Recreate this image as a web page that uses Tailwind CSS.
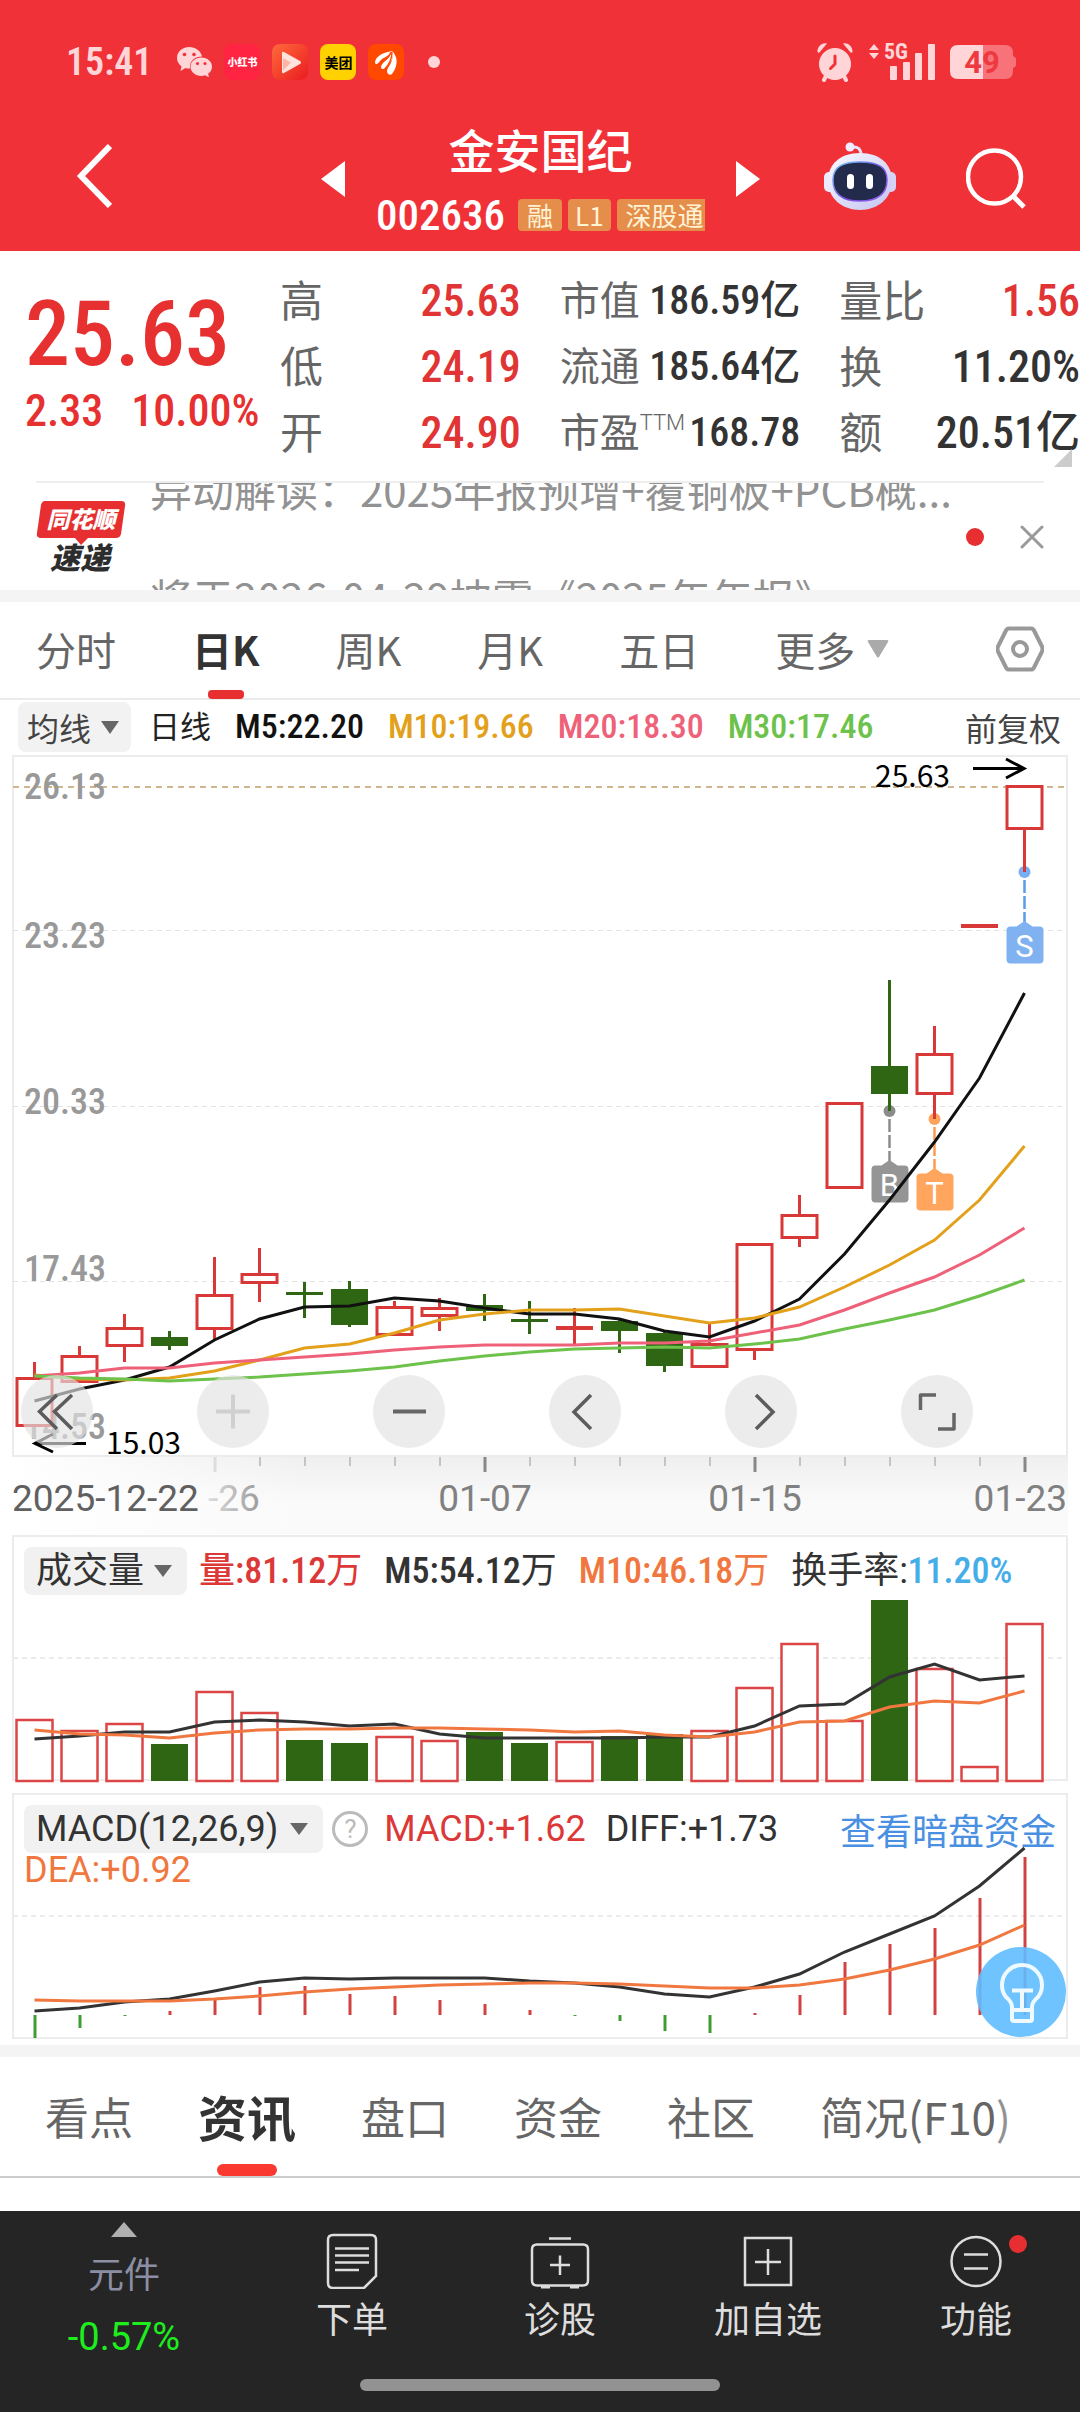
<!DOCTYPE html>
<html lang="zh-CN">
<head>
<meta charset="utf-8">
<meta name="viewport" content="width=device-width, initial-scale=1">
<title>金安国纪 002636</title>
<script src="https://cdn.jsdelivr.net/npm/@tailwindcss/browser@4"></script>
</head>
<body class="min-h-screen bg-white font-['Noto_Sans_CJK_SC',sans-serif] text-[#333333]">
<div class="flex min-h-screen flex-col">

<header class="bg-[#f13138] text-white">
  <!-- status bar -->
  <div class="flex h-[82px] items-center pt-[42px] pr-[64px] pl-[66px] text-[#ffd5d7]">
    <span class="font-['Roboto_Condensed',sans-serif] text-[38px] leading-10 font-semibold">15:41</span>
    <svg class="ml-[25px] h-[30px] w-9" viewBox="0 0 36 30" fill="#ffd5d7"><path d="M12 0C5 0 0 5 0 11c0 4 2 6 4.500 8.500L3.500 24l5-3c1.500.4 3 .6 4.500.5C12 14 18 9.500 25 9.500 24 4 18.500 0 12 0z"/><path d="M24.500 10.500c-6 0-11 4-11 9.200s5 9.200 11 9.200c1.300 0 2.500-.2 3.600-.6l3.900 2-.9-3.600c2.500-1.800 3.900-4.200 3.900-7 0-5.200-4.700-9.200-10.500-9.200z"/><g fill="#f13138"><circle cx="7.500" cy="7.500" r="1.800"/><circle cx="17" cy="7.500" r="1.800"/><circle cx="20.500" cy="16.500" r="1.600"/><circle cx="28" cy="16.500" r="1.600"/></g></svg>
    <span class="ml-[11px] h-9 w-9 rounded-lg bg-[#ff2442] text-center text-[10px] leading-9 font-black text-white">小红书</span>
    <svg class="ml-3 h-9 w-9" viewBox="0 0 36 36"><defs><linearGradient id="play" x1="0" y1="0" x2="1" y2="1"><stop offset="0" stop-color="#ff6a3c"/><stop offset="1" stop-color="#ea1c20"/></linearGradient></defs><rect width="36" height="36" rx="8" fill="url(#play)"/><path d="M10 9q0-2 2-1l16 9q2 1.500 0 3l-16 9q-2 1-2-1z" fill="#ffe3dd"/><path d="M11 14l8 4.500-8 8z" fill="#ffb5a6"/></svg>
    <span class="ml-3 h-9 w-9 rounded-lg bg-[#ffd100] text-center text-[14px] leading-9 font-bold text-black">美团</span>
    <svg class="ml-3 h-9 w-9" viewBox="0 0 36 36"><rect width="36" height="36" rx="8" fill="#ff4800"/><g fill="#fff"><path d="M7 19c0-5 5-10 17-12-3 6-9 6-12 10-2 3-4 4-5 2z"/><path d="M13 23c1-6 9-7 11-16 3 7-2 12-7 17-2 2-4 1-4-1z"/><path d="M19 27c0-4 8-9 5-20 8 8 4 18 0 23-2 2-5 0-5-3z"/></g><path d="M12 19Q20 15 23 8M17 25Q24 17 24 8" fill="none" stroke="#ff4800" stroke-width="1.300"/></svg>
    <span class="ml-6 h-3 w-3 rounded-full bg-[#ffd5d7]"></span>
    <svg class="ml-auto h-10 w-[38px]" viewBox="0 0 38 40" fill="#ffd5d7"><circle cx="19" cy="22" r="16"/><path d="M1.500 10C1 5 6 0 11 1.500L3 11zM36.500 10C37 5 32 0 27 1.500L35 11z"/><path d="M10 34l-2 4M28 34l2 4" stroke="#ffd5d7" stroke-width="4" stroke-linecap="round"/><path d="M19 14v8l-4.500 4.500" stroke="#f13138" stroke-width="3" fill="none" stroke-linecap="round"/></svg>
    <svg class="ml-[14px] h-10 w-[70px]" viewBox="0 0 70 40" fill="#ffd5d7"><path d="M1 8l5-6 5 6zM1 11h10l-5 6z"/><rect x="22" y="24" width="7" height="14" rx="1"/><rect x="35" y="20" width="7" height="18" rx="1"/><rect x="47" y="11" width="7" height="27" rx="1"/><rect x="60" y="2" width="7" height="36" rx="1"/><text x="16" y="17" font-family="Roboto Condensed" font-size="22" font-weight="700">5G</text></svg>
    <svg class="ml-3 h-[34px] w-[66px]" viewBox="0 0 66 34"><path d="M33 0h22q8 0 8 8v3q3 1 3 3v6q0 2-3 3v3q0 8-8 8h-22z" fill="#f77379"/><path d="M33 0H8Q0 0 0 8v18q0 8 8 8h25z" fill="#ffd5d7"/><text x="32" y="28" text-anchor="middle" font-family="Roboto" font-size="31" font-weight="700" fill="#ee3940">49</text></svg>
  </div>
  <!-- title bar -->
  <div class="flex items-start pr-[54px] pl-[76px]">
    <button aria-label="返回" class="mt-[62px]"><svg class="h-16 w-9" viewBox="0 0 36 64" fill="none" stroke="#fff" stroke-width="6"><path d="M34 2L5 32l29 30"/></svg></button>
    <div class="ml-[209px] flex items-start">
      <button aria-label="上一只" class="mt-[79px]"><svg class="h-9 w-6" viewBox="0 0 24 36" fill="#fff"><path d="M24 0v36L0 18z"/></svg></button>
      <div class="mx-[31px] flex w-[329px] flex-col pt-[38px] pb-5">
        <h1 class="text-center text-[46px] leading-[56px] font-medium">金安国纪</h1>
        <div class="mt-[23px] flex h-8 items-center gap-[6px] overflow-hidden">
          <span class="mr-[7px] font-['Roboto_Condensed',sans-serif] text-[43px] leading-8 font-medium">002636</span>
          <span class="shrink-0 rounded-[4px] bg-[#e58e4b] px-[9px] text-[26px] leading-8 text-[#fff3d6]">融</span>
          <span class="shrink-0 rounded-[4px] bg-[#e58e4b] px-[7px] text-[26px] leading-8 text-[#fff3d6]">L1</span>
          <span class="shrink-0 rounded-[4px] bg-[#e58e4b] px-[9px] text-[26px] leading-8 text-[#fff3d6]">深股通</span>
        </div>
      </div>
      <button aria-label="下一只" class="mt-[79px]"><svg class="h-9 w-6" viewBox="0 0 24 36" fill="#fff"><path d="M0 0v36l24-18z"/></svg></button>
    </div>
    <button aria-label="智能助手" class="mt-[60px] ml-auto"><svg class="h-[68px] w-[72px]" viewBox="0 0 72 68"><defs><linearGradient id="bot" x1="0" y1="0" x2="1" y2="1"><stop offset="0" stop-color="#fbfaff"/><stop offset="1" stop-color="#c4c3f2"/></linearGradient><linearGradient id="rim" x1="0" y1="0" x2="1" y2="1"><stop offset="0" stop-color="#6fc7f5"/><stop offset=".6" stop-color="#7a4be0"/><stop offset="1" stop-color="#9a6bf5"/></linearGradient></defs><rect x="0" y="30" width="12" height="20" rx="5" fill="#ecebfb"/><rect x="60" y="30" width="12" height="20" rx="5" fill="#d6d4f6"/><path d="M28 5q9-1 9 8" fill="none" stroke="#e6e4fb" stroke-width="3"/><circle cx="26" cy="5" r="4.500" fill="#efedff"/><path d="M36 11c20 0 32 11 32 28S54 68 36 68 4 56 4 39s12-28 32-28z" fill="url(#bot)"/><path d="M36 20c18 0 27 5 27 18 0 14-9 21-27 21S9 52 9 38c0-13 9-18 27-18z" fill="#232b4d" stroke="url(#rim)" stroke-width="1.500"/><rect x="23" y="32" width="7" height="15" rx="3.500" fill="#fff"/><rect x="42" y="32" width="7" height="15" rx="3.500" fill="#fff"/></svg></button>
    <button aria-label="搜索" class="mt-[65px] ml-[70px]"><svg class="h-[62px] w-[60px]" viewBox="0 0 60 62" fill="none" stroke="#fff" stroke-width="4.500"><circle cx="28.500" cy="30" r="26.500"/><path d="M47 49l11 11" stroke-width="5"/></svg></button>
  </div>
</header>

<!-- quote -->
<section class="relative flex pt-[17px] pb-[15px]">
  <div class="w-[280px] shrink-0 pt-[22px] pl-[25px] font-['Roboto_Condensed',sans-serif] font-medium text-[#e73030]">
    <div class="text-[90px] leading-[90px]">25.63</div>
    <div class="mt-[9px] flex gap-[28px] text-[44px] leading-[44px]"><span>2.33</span><span>10.00%</span></div>
  </div>
  <div class="grid flex-1 grid-cols-3 gap-[39px] leading-[66px] text-[#666666] [&_dt]:leading-[60px]">
    <dl class="text-[43px]">
      <div class="flex h-[66px] justify-between"><dt>高</dt><dd class="font-['Roboto_Condensed'] text-[44px] font-medium text-[#e13434]">25.63</dd></div>
      <div class="flex h-[66px] justify-between"><dt>低</dt><dd class="font-['Roboto_Condensed'] text-[44px] font-medium text-[#e13434]">24.19</dd></div>
      <div class="flex h-[66px] justify-between"><dt>开</dt><dd class="font-['Roboto_Condensed'] text-[44px] font-medium text-[#e13434]">24.90</dd></div>
    </dl>
    <dl class="text-[40px]">
      <div class="flex h-[66px] justify-between whitespace-nowrap"><dt>市值</dt><dd class="font-['Roboto_Condensed','Noto_Sans_CJK_SC'] font-medium text-[#333333]">186.59亿</dd></div>
      <div class="flex h-[66px] justify-between whitespace-nowrap"><dt>流通</dt><dd class="font-['Roboto_Condensed','Noto_Sans_CJK_SC'] font-medium text-[#333333]">185.64亿</dd></div>
      <div class="flex h-[66px] justify-between whitespace-nowrap"><dt class="flex">市盈<span class="font-[Roboto] text-[22px] leading-[46px] font-light">TTM</span></dt><dd class="font-['Roboto_Condensed'] font-medium text-[#333333]">168.78</dd></div>
    </dl>
    <dl class="text-[43px]">
      <div class="flex h-[66px] justify-between whitespace-nowrap"><dt>量比</dt><dd class="font-['Roboto_Condensed'] text-[44px] font-medium text-[#e13434]">1.56</dd></div>
      <div class="flex h-[66px] justify-between whitespace-nowrap"><dt>换</dt><dd class="font-['Roboto_Condensed'] text-[44px] font-medium text-[#333333]">11.20%</dd></div>
      <div class="flex h-[66px] justify-between whitespace-nowrap"><dt>额</dt><dd class="font-['Roboto_Condensed','Noto_Sans_CJK_SC'] text-[44px] font-medium text-[#333333]">20.51亿</dd></div>
    </dl>
  </div>
  <svg class="absolute right-2 bottom-[14px] h-[18px] w-[18px]" viewBox="0 0 18 18" fill="#cccccc"><path d="M18 0v18H0z"/></svg>
</section>

<!-- news ticker -->
<section class="mx-9 flex h-[109px] items-center overflow-hidden border-t-2 border-[#eeeeee]">
  <div class="w-[90px] shrink-0">
    <svg class="h-[76px] w-[90px]" viewBox="0 0 90 76"><path d="M9 2h76q5 0 4 5l-4 28q-1 4-5 4H52l-7 7-6-7H5q-5 0-4-5L5 6q1-4 4-4z" fill="#e72f31"/><g font-family="Noto Sans CJK SC" font-weight="900" font-style="italic" text-anchor="middle"><text x="45" y="29" font-size="23" fill="#fff">同花顺</text><text x="44" y="70" font-size="30" fill="#2d2d2d">速递</text></g></svg>
  </div>
  <div class="ml-[24px] h-[107px] flex-1 self-start overflow-hidden">
    <ul class="-mt-[21px] flex flex-col gap-[54px] text-[42px] leading-[54px] whitespace-nowrap text-[#929292]">
      <li><a href="#news1">异动解读：2025年报预增+覆铜板+PCB概...</a></li>
      <li><a href="#news2">将于2026-04-29披露《2025年年报》</a></li>
    </ul>
  </div>
  <span class="h-[18px] w-[18px] shrink-0 rounded-full bg-[#e72f31]"></span>
  <button aria-label="关闭" class="ml-9 shrink-0"><svg class="h-6 w-6" viewBox="0 0 24 24" stroke="#999" stroke-width="3" stroke-linecap="round"><path d="M2 2l20 20M22 2L2 22"/></svg></button>
</section>
<div class="h-3 bg-[#f4f4f4]"></div>

<!-- period tabs -->
<nav class="flex h-[98px] items-center gap-[76px] border-b-2 border-[#ebebeb] pr-9 pb-[2px] pl-9 text-[40px] leading-[60px] whitespace-nowrap text-[#666666]">
  <a href="#t">分时</a>
  <a href="#d" class="relative font-bold text-[#333333]">日K<span class="absolute -bottom-[20px] left-1/2 h-[9px] w-9 -translate-x-1/2 rounded-[4px] bg-[#e72f31]"></span></a>
  <a href="#w">周K</a>
  <a href="#m">月K</a>
  <a href="#5">五日</a>
  <button class="flex items-center gap-3">更多<svg class="h-[18px] w-[22px]" viewBox="0 0 22 18" fill="#aaaaaa"><path d="M2 0h18q2 0 1 2l-9 15q-1 1-2 0L1 2Q0 0 2 0z"/></svg></button>
  <button aria-label="设置" class="ml-auto"><svg class="h-[46px] w-12" viewBox="0 0 48 46" fill="none" stroke="#999" stroke-width="4" stroke-linejoin="round"><path d="M13 2.500h22q2 0 3 2l8 16q1 2.500 0 5l-8 16q-1 2-3 2H13q-2 0-3-2L2 25.500q-1-2.500 0-5l8-16q1-2 3-2z"/><circle cx="24" cy="23" r="7"/></svg></button>
</nav>

<!-- moving average legend -->
<div class="flex h-[54px] items-center pr-[19px] pl-[18px] text-[32px] leading-[50px] whitespace-nowrap">
  <button class="flex items-center gap-[10px] rounded-lg bg-[#f2f2f2] pr-3 pl-[9px] text-[#444444]">均线<svg class="h-[13px] w-[18px]" viewBox="0 0 18 13" fill="#666"><path d="M0 0h18L9 13z"/></svg></button>
  <div class="ml-[18px] flex items-baseline gap-[24px] font-['Roboto_Condensed','Noto_Sans_CJK_SC'] text-[34px] font-medium">
    <span class="text-[31px] font-normal text-[#222222]">日线</span>
    <span class="text-[#111111]">M5:22.20</span>
    <span class="text-[#e3a01b]">M10:19.66</span>
    <span class="text-[#ee6178]">M20:18.30</span>
    <span class="text-[#6cc24a]">M30:17.46</span>
  </div>
  <button class="ml-auto text-[#444444]">前复权</button>
</div>

<!-- candlestick chart -->
<section class="grid">
  <svg id="kline" class="col-start-1 row-start-1 block w-full" viewBox="0 754 1080 780">
    <defs>
      <linearGradient id="axisDown" x1="0" y1="0" x2="0" y2="1"><stop offset="0" stop-color="#efefef"/><stop offset=".6" stop-color="#fafafa"/><stop offset="1" stop-color="#fafafa"/></linearGradient>
      <linearGradient id="axisLeft" x1="0" y1="0" x2="1" y2="0"><stop offset="0" stop-color="#fff"/><stop offset="1" stop-color="#fff" stop-opacity="0"/></linearGradient>
      <linearGradient id="fade" gradientUnits="userSpaceOnUse" x1="205" y1="0" x2="262" y2="0"><stop offset="0" stop-color="#e0e0e0"/><stop offset="1" stop-color="#999"/></linearGradient>
    </defs>
    <rect x="12" y="1456" width="1056" height="78" fill="url(#axisDown)"/>
    <rect x="12" y="1456" width="300" height="78" fill="url(#axisLeft)"/>
    <rect x="13" y="756" width="1054" height="700" fill="#fff" stroke="#ececec" stroke-width="2"/>
    <g stroke="#e2e2e2" stroke-width="1" stroke-dasharray="5 4"><path d="M13 930.500H1066M13 1106.500H1066M13 1281.500H1066"/><path d="M13 787H1066" stroke="#c2a06a" stroke-width="1.500" stroke-dasharray="6 5"/></g>
    <g font-family="Roboto Condensed" font-size="36" font-weight="500" fill="#999"><text x="24" y="799">26.13</text><text x="24" y="948">23.23</text><text x="24" y="1114">20.33</text><text x="24" y="1281">17.43</text><text x="24" y="1439">14.53</text></g>
    <g id="candles"></g>
    <g font-family="Roboto" font-size="31" fill="#fff" text-anchor="middle">
      <g stroke-width="2.500" stroke-dasharray="13 3"><path d="M889.500 1119V1161" stroke="#8c8c8c"/><path d="M934.500 1127V1169" stroke="#ff9a4d"/><path d="M1024.500 880V922" stroke="#5b9bea"/></g>
      <circle cx="889.500" cy="1111" r="6" fill="#8c8c8c"/><path d="M889.500 1160l8 5.500h7q4 0 4 4v29q0 4-4 4h-29q-4 0-4-4v-29q0-4 4-4h6z" fill="#959595"/><text x="889.500" y="1196">B</text>
      <circle cx="934.500" cy="1119" r="6" fill="#ffa25c"/><path d="M934.500 1168l8 5.500h7q4 0 4 4v29q0 4-4 4h-29q-4 0-4-4v-29q0-4 4-4h6z" fill="#ffa55e"/><text x="934.500" y="1204">T</text>
      <circle cx="1024.500" cy="872" r="6" fill="#78aef2"/><path d="M1024.500 921l8 5.500h7q4 0 4 4v29q0 4-4 4h-29q-4 0-4-4v-29q0-4 4-4h6z" fill="#80b2f2"/><text x="1024.500" y="957">S</text>
      <path d="M889.500 1097V1111" stroke="#2f6614" stroke-width="3"/><path d="M934.500 1097V1119M1024.500 832V872" stroke="#d93838" stroke-width="3"/>
    </g>
    <g id="averages"></g>
    <g stroke="#000" stroke-width="3" fill="none"><path d="M973 768.500H1024M1006 759l18 9.500-18 9.500"/><path d="M86 1443.500H36M53 1434l-18 9.500 18 8.500"/></g>
    <g font-family="Noto Sans CJK SC" font-size="30" fill="#000"><text x="875" y="787">25.63</text><text x="106" y="1454">15.03</text></g>
    <g id="ticks"></g>
    <g font-family="Roboto" font-size="37" fill="#808080"><text x="12" y="1511" fill="#606060">2025-12-22</text><text x="208" y="1511" fill="url(#fade)">-26</text><text x="485" y="1511" text-anchor="middle">01-07</text><text x="755" y="1511" text-anchor="middle">01-15</text><text x="1067" y="1511" text-anchor="end">01-23</text></g>
  </svg>
  <div class="col-start-1 row-start-1 mb-[86px] flex items-end justify-between self-end pr-[107px] pl-[21px]">
    <button aria-label="最早" class="h-[73px] w-[72px] rounded-full bg-[#e2e2e2]/66"><svg class="h-full w-full" viewBox="0 0 72 73" fill="none" stroke="#5c5c5c" stroke-width="3.500"><path d="M36 20L18.500 36.500 36 54M51 20L33.500 36.500 51 54"/></svg></button>
    <button aria-label="放大" class="h-[73px] w-[72px] rounded-full bg-[#e2e2e2]/66"><svg class="h-full w-full" viewBox="0 0 72 73" stroke="#d0d0d0" stroke-width="4"><path d="M19 36.500H53M36 19.500V53.500"/></svg></button>
    <button aria-label="缩小" class="h-[73px] w-[72px] rounded-full bg-[#e2e2e2]/66"><svg class="h-full w-full" viewBox="0 0 72 73" stroke="#666" stroke-width="4"><path d="M20 36.500H53"/></svg></button>
    <button aria-label="左移" class="h-[73px] w-[72px] rounded-full bg-[#e2e2e2]/66"><svg class="h-full w-full" viewBox="0 0 72 73" fill="none" stroke="#5c5c5c" stroke-width="3.500"><path d="M42 20L25 37l17 17"/></svg></button>
    <button aria-label="右移" class="h-[73px] w-[72px] rounded-full bg-[#e2e2e2]/66"><svg class="h-full w-full" viewBox="0 0 72 73" fill="none" stroke="#5c5c5c" stroke-width="3.500"><path d="M31 20l17 17-17 17"/></svg></button>
    <button aria-label="全屏" class="h-[73px] w-[72px] rounded-full bg-[#e2e2e2]/66"><svg class="h-full w-full" viewBox="0 0 72 73" fill="none" stroke="#666" stroke-width="3.500" stroke-linejoin="round"><path d="M35 20H19.500V35M53 38V54H37"/></svg></button>
  </div>
</section>

<!-- volume -->
<section class="grid">
  <svg id="volume" class="col-start-1 row-start-1 block w-full" viewBox="0 1534 1080 253">
    <rect x="13" y="1536" width="1054" height="244" fill="#fff" stroke="#ececec" stroke-width="2"/>
    <path d="M13 1658H1066" stroke="#ebebeb" stroke-width="2" stroke-dasharray="5 4"/>
  </svg>
  <div class="col-start-1 row-start-1 mt-[13px] flex h-12 items-center self-start pl-6 font-['Roboto_Condensed','Noto_Sans_CJK_SC'] text-[36px] leading-[50px] font-medium whitespace-nowrap">
    <button class="flex h-12 items-center gap-[10px] rounded-lg bg-[#f1f1f1] pr-[15px] pl-3 font-normal">成交量<svg class="h-3 w-[18px]" viewBox="0 0 18 12" fill="#666"><path d="M0 0h18L9 12z"/></svg></button>
    <span class="ml-3 text-[#dc3838]">量:81.12<span class="font-normal">万</span></span>
    <span class="ml-[22px]">M5:54.12<span class="font-normal">万</span></span>
    <span class="ml-[22px] text-[#f07840]">M10:46.18<span class="font-normal">万</span></span>
    <span class="ml-[22px]"><span class="font-normal">换手率:</span><span class="text-[#45aee8]">11.20%</span></span>
  </div>
</section>

<!-- MACD -->
<section class="relative grid">
  <svg id="macd" class="col-start-1 row-start-1 block w-full" viewBox="0 1787 1080 258">
    <rect x="13" y="1794" width="1054" height="244" fill="#fff" stroke="#ececec" stroke-width="2"/>
    <path d="M13 1916H1066" stroke="#ebebeb" stroke-width="2" stroke-dasharray="5 4"/>
  </svg>
  <div class="col-start-1 row-start-1 mt-[18px] self-start pr-[24px] pl-6 font-[Roboto] text-[36px] whitespace-nowrap">
    <div class="flex h-12 items-center leading-[50px]">
      <button class="flex h-12 items-center gap-3 rounded-lg bg-[#f1f1f1] pr-[15px] pl-3">MACD(12,26,9)<svg class="h-3 w-[18px]" viewBox="0 0 18 12" fill="#666"><path d="M0 0h18L9 12z"/></svg></button>
      <button aria-label="说明" class="ml-[9px] h-9 w-9 rounded-full border-[3px] border-[#bbbbbb] text-[26px] leading-[30px] text-[#bbbbbb]">?</button>
      <span class="ml-[16px] text-[#dc3838]">MACD:+1.62</span>
      <span class="ml-5">DIFF:+1.73</span>
      <a href="#fund" class="ml-auto font-['Noto_Sans_CJK_SC'] leading-[46px] text-[#4a90e2]">查看暗盘资金</a>
    </div>
    <div class="leading-[34px] text-[#f07840]">DEA:+0.92</div>
  </div>
  <button aria-label="提示" class="absolute right-[14px] bottom-2 h-[90px] w-[90px] rounded-full bg-[#5fbcff]/90"><svg class="h-full w-full" viewBox="0 0 90 90" fill="none" stroke="#eefaff" stroke-width="4" stroke-linejoin="round"><path d="M36 72V60q0-5-6-10-4-5-4-12a20 20 0 0 1 40 0q0 7-4 12-6 5-6 10v12q0 2-2 2H38q-2 0-2-2zM36 63H56M36 43.500H57M46 44V63"/></svg></button>
</section>
<div class="h-3 bg-[#f4f4f4]"></div>

<!-- content tabs -->
<nav class="flex h-[121px] items-center gap-[65px] border-b-2 border-[#cccccc] pb-[2px] pl-[45px] text-[44px] leading-[72px] whitespace-nowrap text-[#666666]">
  <a href="#view">看点</a>
  <a href="#info" class="relative text-[49px] font-bold text-[#333333]">资讯<span class="absolute -bottom-[24px] left-1/2 h-3 w-[60px] -translate-x-1/2 rounded-full bg-[#fa3a31]"></span></a>
  <a href="#book">盘口</a>
  <a href="#money">资金</a>
  <a href="#club">社区</a>
  <a href="#f10">简况(F10<span class="text-[#929292]">)</span></a>
</nav>
<div class="min-h-[33px] flex-1"></div>

<!-- bottom bar -->
<footer class="bg-[#252525] text-[36px] text-[#dddddd]">
  <div class="grid h-[168px] grid-cols-[248fr_208fr_208fr_208fr_208fr]">
    <button class="flex flex-col items-center pt-[11px] text-[#8c8fa3]">
      <svg class="h-[15px] w-[26px]" viewBox="0 0 26 15" fill="#b0b0b0"><path d="M13 0l13 15H0z"/></svg>
      <span class="mt-[11px] leading-[48px]">元件</span>
      <span class="mt-[17px] font-[Roboto] text-[38px] leading-[48px] text-[#1eee1e]">-0.57%</span>
    </button>
    <button class="flex flex-col items-center pt-[22px]">
      <svg class="h-14 w-[52px]" viewBox="0 0 52 56" fill="none" stroke="#ddd" stroke-width="2.500"><path d="M7 2h38q5 0 5 5v36L38 55H7q-5 0-5-5V7q0-5 5-5zM9 15.500H43M9 22.500H43M9 29.500H43M9 37H33"/></svg>
      <span class="mt-1 leading-[48px]">下单</span>
    </button>
    <button class="flex flex-col items-center pt-[22px]">
      <svg class="h-14 w-[60px]" viewBox="0 0 60 56" fill="none" stroke="#ddd" stroke-width="2.500"><path d="M19 5.500H41M7 11.500H53q5 0 5 5v31q0 5-5 5H7q-5 0-5-5v-31q0-5 5-5zM30 22.500V42M20 32H40"/><path d="M11 54H20M40 54H49" stroke-width="3"/></svg>
      <span class="mt-1 leading-[48px]">诊股</span>
    </button>
    <button class="flex flex-col items-center pt-[22px]">
      <svg class="h-14 w-[52px]" viewBox="0 0 52 56" fill="none" stroke="#ddd" stroke-width="2.500"><path d="M3 5H49V52H3zM26 16V42M13 29H39"/></svg>
      <span class="mt-1 leading-[48px]">加自选</span>
    </button>
    <button class="relative flex flex-col items-center pt-[22px]">
      <svg class="h-14 w-[54px]" viewBox="0 0 54 56" fill="none" stroke="#ddd" stroke-width="2.500"><circle cx="27" cy="28.500" r="24.500"/><path d="M15 21.500H39M15 35.500H39"/></svg>
      <span class="mt-1 leading-[48px]">功能</span>
      <span class="absolute top-6 left-1/2 ml-[33px] h-[18px] w-[18px] rounded-full bg-[#e72f31]"></span>
    </button>
  </div>
  <div class="mx-auto mb-[21px] h-3 w-1/3 rounded-full bg-[#929292]"></div>
</footer>
</div>

<script>
const NS = 'http://www.w3.org/2000/svg';
const x = i => 34.5 + 45 * i;
const add = (parent, tag, attrs) => {
  const el = document.createElementNS(NS, tag);
  for (const k in attrs) el.setAttribute(k, attrs[k]);
  parent.appendChild(el);
};
const RED = '#d93838', GREEN = '#2f6614';
const line = (g, ys, color) => add(g, 'polyline', {
  points: ys.map((y, i) => x(i) + ',' + y).join(' '), fill: 'none', stroke: color, 'stroke-width': 3
});

// candles: [rising, bodyTop, bodyBottom, high, low]
const candles = [
  [1,1377,1427,1362,1427],[1,1355,1383,1346,1383],[1,1327,1347,1314,1362],[0,1337,1346,1331,1350],
  [1,1294,1330,1257,1340],[1,1273,1284,1248,1302],[0,1292,1295,1282,1318],[0,1289,1325,1281,1327],
  [1,1306,1336,1301,1336],[1,1307,1317,1298,1331],[0,1305,1311,1294,1321],[0,1319,1322,1301,1334],
  [1,1326,1330,1308,1344],[0,1321,1331,1318,1353],[0,1333,1366,1331,1372],[1,1343,1368,1324,1368],
  [1,1243,1351,1243,1360],[1,1214,1239,1195,1247],[1,1102,1189,1102,1189],[0,1066,1094,980,1111],
  [1,1053,1095,1026,1119],[1,924,928,924,928],[1,785,830,785,872]
];
const cg = document.getElementById('candles');
candles.forEach(([up, top, bottom, high, low], i) => {
  const c = up ? RED : GREEN;
  if (high < top) add(cg, 'path', { d: `M${x(i)} ${high}V${top}`, stroke: c, 'stroke-width': 3 });
  if (low > bottom) add(cg, 'path', { d: `M${x(i)} ${bottom}V${low}`, stroke: c, 'stroke-width': 3 });
  if (up && bottom - top > 5) add(cg, 'rect', { x: x(i) - 17.5, y: top + 1.5, width: 35, height: bottom - top - 3, fill: '#fff', stroke: c, 'stroke-width': 3 });
  else add(cg, 'rect', { x: x(i) - 18.5, y: top, width: 37, height: bottom - top, fill: c });
});
const ag = document.getElementById('averages');
line(ag, [1401,1389,1380,1367,1340,1319,1307,1306,1298,1301,1308,1314,1314,1319,1331,1337,1321,1299,1254,1200,1142,1078,993], '#111');
line(ag, [1375,1379,1380,1378,1371,1360,1348,1344,1333,1320,1314,1310,1310,1309,1316,1323,1318,1307,1287,1265,1240,1200,1146], '#e3a01b');
line(ag, [1376,1373,1368,1368,1363,1360,1357,1354,1350,1347,1345,1345,1345,1343,1343,1341,1333,1325,1310,1293,1277,1255,1228], '#ee6178');
line(ag, [1376,1378,1379,1381,1379,1377,1374,1371,1367,1361,1356,1352,1349,1348,1347,1348,1344,1339,1329,1320,1310,1296,1280], '#6cc24a');

const tg = document.getElementById('ticks');
for (let i = 4; i < 23; i++) {
  const major = (i - 4) % 6 === 0;
  add(tg, 'path', { d: `M${x(i) + .5} 1457V${major ? 1472 : 1466}`, stroke: i === 4 ? '#ddd' : major ? '#888' : '#c4c4c4', 'stroke-width': major ? 3 : 2 });
}

// volume bars: [rising, top]
const vg = document.getElementById('volume');
[[1,1719],[1,1730],[1,1723],[0,1744],[1,1691],[1,1712],[0,1740],[0,1743],[1,1736],[1,1740],[0,1732],[0,1743],
 [1,1741],[0,1736],[0,1734],[1,1730],[1,1687],[1,1643],[1,1720],[0,1600],[1,1668],[1,1766],[1,1623]].forEach(([up, top], i) => {
  if (up) add(vg, 'rect', { x: x(i) - 18, y: top + 1, width: 36, height: 1780 - top, fill: '#fff', stroke: '#dc4545', 'stroke-width': 2.5 });
  else add(vg, 'rect', { x: x(i) - 18.5, y: top, width: 37, height: 1781 - top, fill: GREEN });
});
line(vg, [1739,1736,1732,1732,1722,1720,1722,1726,1724,1734,1738,1738,1738,1738,1737,1737,1726,1706,1704,1677,1664,1680,1676], '#333');
line(vg, [1730,1734,1735,1738,1733,1730,1729,1729,1728,1728,1729,1730,1732,1731,1735,1737,1732,1722,1721,1707,1701,1703,1691], '#f07840');

// MACD histogram ends; the zero line is at 2015
const mg = document.getElementById('macd');
[2038,2028,2016,2011,2000,1987,1986,1994,1996,2000,2004,2010,2016,2021,2031,2033,2013,1995,1962,1944,1928,1898,1857].forEach((y, i) =>
  add(mg, 'path', { d: `M${x(i) + .5} 2015V${y}`, stroke: y > 2015 ? '#3f9c35' : '#d24040', 'stroke-width': 3 }));
line(mg, [2011,2008,2002,1999,1991,1982,1978,1979,1978,1978,1978,1981,1983,1987,1994,1997,1987,1974,1952,1934,1916,1886,1848], '#333');
line(mg, [2000,2001,2001,2001,1999,1996,1992,1989,1987,1985,1984,1983,1983,1984,1986,1988,1988,1985,1979,1970,1959,1945,1925], '#f07840');
</script>
</body>
</html>
